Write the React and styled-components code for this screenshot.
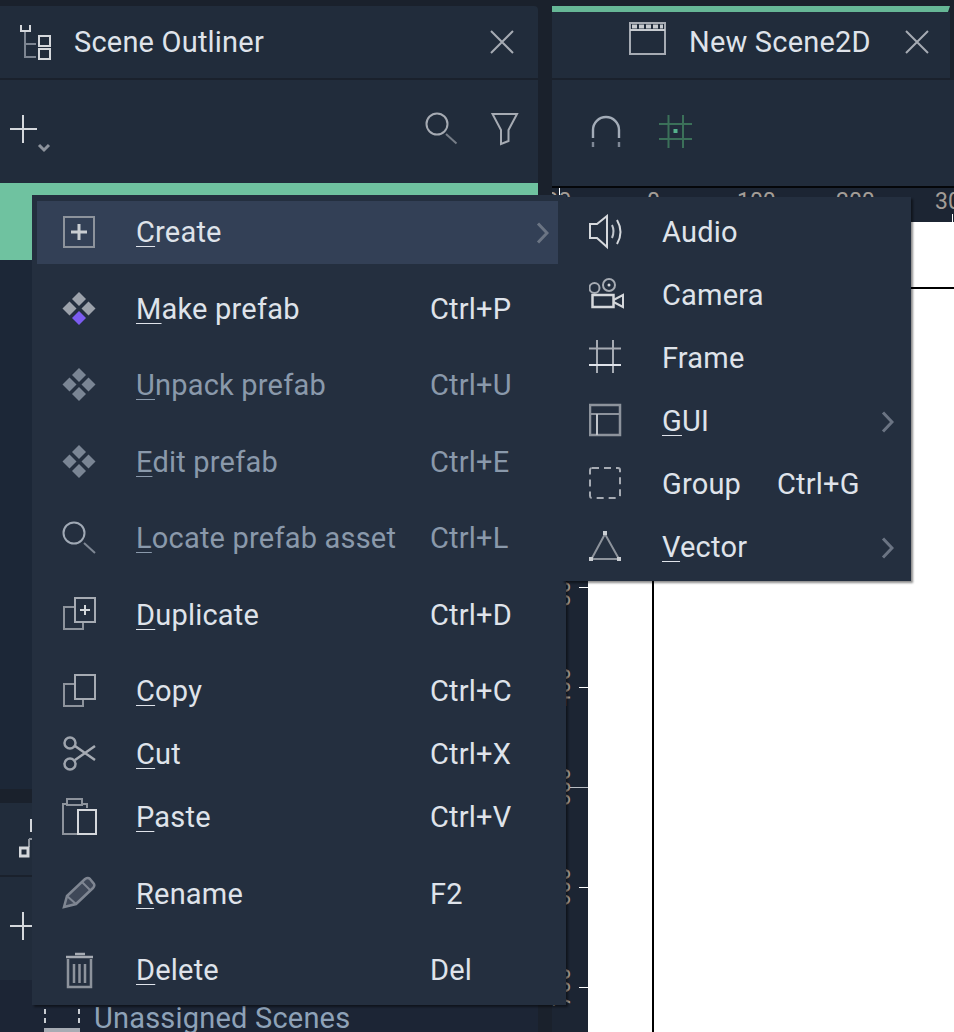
import styled, { createGlobalStyle } from "styled-components";

const GlobalStyle = createGlobalStyle`
  html, body { margin: 0; padding: 0; background: #1a212c; }
  body { font-family: Roboto, "Liberation Sans", sans-serif; }
`;

const Page = styled.div`
  position: relative;
  width: 954px;
  height: 1032px;
  overflow: hidden;
  display: flex;
  gap: 14px;
  padding-top: 6px;
  box-sizing: border-box;
  background: #1a212c;
`;

const LeftColumn = styled.div`
  width: 538px;
  flex: none;
  display: flex;
  flex-direction: column;
`;

const RightColumn = styled.div`
  flex: 1;
  min-width: 0;
  display: flex;
  flex-direction: column;
`;

const Header = styled.div`
  height: 72px;
  flex: none;
  display: flex;
  align-items: center;
  background: #212c3b;
  color: #dfe3ea;
  font-size: 29px;
  letter-spacing: 0.2px;
  padding-left: ${(p) => p.$left || 20}px;
  padding-right: ${(p) => p.$right || 22}px;
  box-sizing: border-box;
  border-radius: 0 4px 0 0;
`;

const TabHeader = styled(Header)`
  height: 66px;
  padding-bottom: 6px;
  border-radius: 0;
  margin-right: 4px;
`;

const TabStripe = styled.div`
  height: 6px;
  flex: none;
  margin-right: 4px;
  background: #66b796;
  clip-path: polygon(0 0, 100% 0, 99.5% 100%, 0 100%);
`;

const HeaderTitle = styled.span`
  margin-left: ${(p) => p.$gap}px;
  flex: 1;
  white-space: nowrap;
`;

const Toolbar = styled.div`
  height: ${(p) => p.$height || 103}px;
  margin-top: 2px;
  flex: none;
  display: flex;
  align-items: center;
  background: #212c3b;
  box-sizing: border-box;
  padding-left: ${(p) => p.$left || 0}px;
  padding-right: ${(p) => p.$right || 0}px;
  padding-bottom: ${(p) => p.$bottom || 0}px;
  gap: ${(p) => p.$gap || 0}px;
`;

const ToolSpacer = styled.div`
  flex: 1;
`;

const ToolGroup = styled.div`
  display: flex;
  align-items: center;
  gap: 33px;
`;

const Selected = styled.div`
  height: 77px;
  flex: none;
  background: #6fc2a0;
`;

const ListArea = styled.div`
  flex: 1;
  background: #1c2737;
`;

const PanelGap = styled.div`
  height: 14px;
  flex: none;
  background: #1a212c;
`;

const BottomList = styled.div`
  height: 52px;
  flex: none;
  display: flex;
  gap: 14px;
  padding: 20px 0 0 44px;
  box-sizing: border-box;
  color: #8ea2b8;
  font-size: 29px;
  letter-spacing: 0.2px;
  line-height: 36px;
  background: #1c2535;
`;

const ScenePane = styled.div`
  position: relative;
  flex: 1;
  background: #1c2533;
  border-top: 2px solid #05070a;
  overflow: hidden;
`;

const Canvas = styled.div`
  position: absolute;
  left: 36px;
  top: 34px;
  right: 0;
  bottom: 0;
  background: #fff;
`;

const AxisX = styled.div`
  position: absolute;
  left: 0;
  right: 0;
  top: 65px;
  height: 2px;
  background: #000;
`;

const AxisY = styled.div`
  position: absolute;
  left: 64px;
  top: 0;
  bottom: 0;
  width: 2px;
  background: #000;
`;

const TopLabel = styled.span`
  position: absolute;
  top: 0;
  font-size: 23px;
  line-height: 27px;
  color: #a39d97;
`;

const SideLabel = styled.span`
  position: absolute;
  left: -3px;
  font-size: 23px;
  line-height: 27px;
  color: #a39d97;
  writing-mode: vertical-rl;
  transform: translateY(-50%) rotate(180deg);
`;

const SideTick = styled.i`
  position: absolute;
  left: ${(p) => (p.$long ? 18 : 27)}px;
  right: calc(100% - 36px);
  height: 1px;
  background: ${(p) => (p.$long ? "#b9bdc4" : "#fff")};
`;

const TopTick = styled.i`
  position: absolute;
  width: 1px;
  background: #fff;
`;

const Menu = styled.div`
  position: absolute;
  left: ${(p) => p.$x}px;
  top: ${(p) => p.$y}px;
  width: ${(p) => p.$w}px;
  box-sizing: border-box;
  padding: ${(p) => p.$pad};
  background: #242f3f;
  box-shadow: 2px 2px 2px rgba(0, 0, 0, 0.45);
`;

const Row = styled.div`
  height: 63px;
  position: relative;
  display: flex;
  align-items: center;
  font-size: 29px;
  letter-spacing: 0.2px;
  white-space: nowrap;
  color: ${(p) => (p.$off ? "#8a99ab" : "#dfe3ea")};
  background: ${(p) => (p.$active ? "#334056" : "transparent")};
  margin-bottom: ${(p) => (p.$sep ? 13.5 : 0)}px;
`;

const IconSlot = styled.div`
  width: ${(p) => p.$w}px;
  flex: none;
  display: flex;
  padding-left: ${(p) => p.$left}px;
  box-sizing: border-box;
`;

const Label = styled.span`
  width: ${(p) => p.$w}px;
  flex: none;
`;

const Mnemonic = styled.u`
  text-decoration-thickness: 1px;
  text-underline-offset: 4px;
`;

const Shortcut = styled.span`
  flex: none;
`;

const Arrow = styled.svg`
  position: absolute;
  right: ${(p) => p.$right}px;
  top: 21px;
`;

const PlusSvg = styled.svg`
  margin-top: 13px;
`;

const ClapSvg = styled.svg`
  margin-top: -7px;
`;

const StubIcon = styled.svg`
  margin-left: -1px;
`;

const Svg = ({ w = 36, h = 36, children }) => (
  <svg width={w} height={h} viewBox={`0 0 ${w} ${h}`} fill="none" stroke="#a6abb3" strokeWidth="2">
    {children}
  </svg>
);

const Chevron = ({ right }) => (
  <Arrow $right={right} width="13" height="22" viewBox="0 0 13 22" fill="none" stroke="#6b7483" strokeWidth="3">
    <path d="M2 1.5 11 11 2 20.5" />
  </Arrow>
);

const OutlinerIcon = () => (
  <Svg w={32} h={36}>
    <path d="M1 1v6h9V1" stroke="#d5d8dc" />
    <path d="M5 8v25h11M5 20h11" stroke="#7d8591" />
    <rect x="19" y="12" width="11" height="10" stroke="#d5d8dc" />
    <rect x="19" y="25" width="11" height="10" stroke="#d5d8dc" />
  </Svg>
);

const SecondHeaderIcon = () => (
  <StubIcon width="14" height="40" viewBox="0 0 14 40" fill="none" stroke="#d5d8dc" strokeWidth="2">
    <path d="M12 0V13" />
    <path d="M10 20H14M10 20V28" stroke="#8d939c" />
    <rect x="1" y="29" width="8" height="8" strokeWidth="3" />
  </StubIcon>
);

const CloseIcon = () => (
  <svg width="26" height="26" viewBox="0 0 26 26" stroke="#a6abb3" strokeWidth="2">
    <path d="M2 2 24 24M24 2 2 24" />
  </svg>
);

const ClapIcon = () => (
  <ClapSvg width="38" height="34" viewBox="0 0 38 34" fill="none" stroke="#a6abb3" strokeWidth="2">
    <rect x="1" y="1" width="35" height="31" />
    <path d="M1 8h35" stroke="#c7cbd0" strokeWidth="2" />
    <path d="M3 4.500h31" stroke="#c7cbd0" strokeWidth="4" strokeDasharray="5 2" />
  </ClapSvg>
);

const PlusDrop = () => (
  <PlusSvg width="52" height="40" viewBox="0 0 52 40" fill="none" stroke="#d5d8dc" strokeWidth="2">
    <path d="M13 0V28M0 14H27" />
    <path d="M29 30l5 5 5-5" stroke="#8d939c" strokeWidth="3" />
  </PlusSvg>
);

const PlusOnly = () => (
  <PlusSvg width="52" height="40" viewBox="0 0 52 40" fill="none" stroke="#d5d8dc" strokeWidth="2">
    <path d="M13 0V28M0 14H27" />
  </PlusSvg>
);

const SearchIcon = () => (
  <svg width="33" height="33" viewBox="0 0 33 33" fill="none" stroke="#a6abb3" strokeWidth="2">
    <circle cx="12" cy="12" r="10.500" />
    <path d="M21 22 31.500 31.500" stroke="#767d87" />
  </svg>
);

const FilterIcon = () => (
  <svg width="28" height="34" viewBox="0 0 28 34" fill="none" stroke="#a6abb3" strokeWidth="2">
    <path d="M1.500 2H26L17.500 18V29L10 32V18Z" />
  </svg>
);

const MagnetIcon = () => (
  <svg width="30" height="33" viewBox="0 0 30 33" fill="none" stroke="#a3acb8" strokeWidth="2.400">
    <path d="M2 23V15a13 13 0 0 1 26 0v8" />
    <path d="M2 27v5M28 27v5" stroke="#7f8896" />
  </svg>
);

const GridIcon = () => (
  <svg width="33" height="33" viewBox="0 0 33 33" fill="none" stroke="#3b7059" strokeWidth="2">
    <path d="M9.500 0V33M24 0V33M0 9H33M0 24H33" />
    <rect x="14.500" y="14" width="4" height="4" fill="#55b28c" stroke="none" />
  </svg>
);

const PlusBox = () => (
  <Svg>
    <rect x="3" y="3" width="30" height="30" stroke="#8d939c" />
    <path d="M18 10V26M10 18H26" stroke="#c9cdd2" strokeWidth="3" />
  </Svg>
);

const Prefab = ({ accent, off }) => {
  const c = off ? "#7a8594" : "#9ca2ab";
  const diamond = (x, y, fill) => <path d={`M${x} ${y - 7}l7 7-7 7-7-7z`} fill={fill} stroke="none" />;
  return (
    <Svg>
      {diamond(18, 8, c)}
      {diamond(8.500, 17.500, c)}
      {diamond(27.500, 17.500, c)}
      {diamond(18, 27, accent ? "#7c5cf0" : c)}
    </Svg>
  );
};

const LocateIcon = () => (
  <Svg>
    <circle cx="13" cy="13" r="10.500" stroke="#a0a9b5" />
    <path d="M23 23 34 33" stroke="#7e8794" />
  </Svg>
);

const DuplicateIcon = () => (
  <Svg>
    <path d="M13 10H3V32H22V26" stroke="#8d939c" />
    <rect x="14" y="1" width="20" height="24" stroke="#a6abb3" />
    <path d="M24 8V18M19 13H29" stroke="#d5d8dc" />
  </Svg>
);

const CopyIcon = () => (
  <Svg>
    <path d="M13 11H3V33H22V27" stroke="#8d939c" />
    <rect x="14" y="2" width="20" height="24" stroke="#a6abb3" />
  </Svg>
);

const CutIcon = () => (
  <Svg>
    <circle cx="9" cy="7" r="5.500" stroke="#9ea4ad" strokeWidth="2.500" />
    <circle cx="9" cy="28" r="5.500" stroke="#9ea4ad" strokeWidth="2.500" />
    <path d="M14 10 34 24M14 24 34 10" stroke="#a6abb3" strokeWidth="2.500" />
  </Svg>
);

const PasteIcon = () => (
  <Svg w={38} h={38}>
    <path d="M6 6H2V36H16M21 6H26V10" stroke="#8d939c" />
    <rect x="6" y="1" width="15" height="6" stroke="#8d939c" />
    <rect x="17" y="12" width="18" height="24" stroke="#d5d8dc" />
  </Svg>
);

const PencilIcon = () => (
  <Svg>
    <path d="M3 31 6 20 24 3Q27 1 29 3L33 8Q34 10 32 12L15 28Z" fill="#3f4858" stroke="#7f8692" strokeWidth="2.500" />
    <path d="M21 6 30 15M6 20 15 28" stroke="#7f8692" strokeWidth="2" />
  </Svg>
);

const TrashIcon = () => (
  <Svg w={36} h={38}>
    <path d="M5 6H32" stroke="#a6abb3" strokeWidth="2.500" />
    <path d="M14 3H24" stroke="#a6abb3" strokeWidth="2.500" />
    <path d="M7 8V36H30V8M13 13V32M18.500 13V32M24 13V32" stroke="#8d939c" strokeWidth="2.500" />
  </Svg>
);

const AudioIcon = () => (
  <Svg>
    <path d="M1 10H8L18 2V33L8 24H1Z" stroke="#d5d8dc" />
    <path d="M23 11q3 6 0 13" stroke="#c2c6cc" />
    <path d="M28 6q7 12 0 24" stroke="#d5d8dc" />
  </Svg>
);

const CameraIcon = () => (
  <Svg w={36} h={34}>
    <circle cx="5.500" cy="10" r="5" stroke="#a6abb3" />
    <circle cx="20" cy="7" r="6" stroke="#a6abb3" />
    <circle cx="20" cy="7" r="1.500" fill="#d5d8dc" stroke="none" />
    <rect x="3.500" y="17" width="21" height="12" stroke="#d5d8dc" strokeWidth="2.500" />
    <path d="M24.500 24 34 29V17L24.500 22" stroke="#d5d8dc" />
  </Svg>
);

const FrameIcon = () => (
  <Svg>
    <path d="M8 0V33M24 0V33" stroke="#a6abb3" />
    <path d="M0 8.500H32" stroke="#a6abb3" />
    <path d="M0 25H32" stroke="#dfe3ea" />
  </Svg>
);

const GuiIcon = () => (
  <Svg>
    <rect x="1" y="2" width="30" height="30" stroke="#8d939c" strokeWidth="2.500" />
    <path d="M1 11H31" stroke="#8d939c" />
    <path d="M8 11V32" stroke="#c0c4ca" />
  </Svg>
);

const GroupIcon = () => (
  <Svg>
    <rect x="1" y="2" width="30" height="30" rx="2" stroke="#a6abb3" strokeDasharray="7 5" />
  </Svg>
);

const VectorIcon = () => (
  <Svg>
    <path d="M16 5 2.500 30H30Z" stroke="#8d939c" />
    <rect x="14" y="2" width="4" height="4" fill="#c9cdd2" stroke="none" />
    <rect x="0" y="28" width="4" height="4" fill="#c9cdd2" stroke="none" />
    <rect x="28" y="28" width="4" height="4" fill="#c9cdd2" stroke="none" />
  </Svg>
);

const UnassignedIcon = () => (
  <svg width="36" height="32" viewBox="0 0 36 32" fill="none" stroke="#c9cdd2" strokeWidth="2">
    <path d="M1 0V26" strokeDasharray="5 4" />
    <path d="M35 0V26" strokeDasharray="5 4" />
    <path d="M0 28H36V32H0Z" fill="#a6abb3" stroke="none" />
  </svg>
);

const mainItems = [
  { icon: <PlusBox />, key: "C", rest: "reate", active: true, arrow: true, sep: true },
  { icon: <Prefab accent />, key: "M", rest: "ake prefab", cut: "Ctrl+P", sep: true },
  { icon: <Prefab off />, key: "U", rest: "npack prefab", cut: "Ctrl+U", off: true, sep: true },
  { icon: <Prefab off />, key: "E", rest: "dit prefab", cut: "Ctrl+E", off: true, sep: true },
  { icon: <LocateIcon />, key: "L", rest: "ocate prefab asset", cut: "Ctrl+L", off: true, sep: true },
  { icon: <DuplicateIcon />, key: "D", rest: "uplicate", cut: "Ctrl+D", sep: true },
  { icon: <CopyIcon />, key: "C", rest: "opy", cut: "Ctrl+C" },
  { icon: <CutIcon />, key: "C", rest: "ut", cut: "Ctrl+X" },
  { icon: <PasteIcon />, key: "P", rest: "aste", cut: "Ctrl+V", sep: true },
  { icon: <PencilIcon />, key: "R", rest: "ename", cut: "F2", sep: true },
  { icon: <TrashIcon />, key: "D", rest: "elete", cut: "Del" },
];

const subItems = [
  { icon: <AudioIcon />, rest: "Audio" },
  { icon: <CameraIcon />, rest: "Camera" },
  { icon: <FrameIcon />, rest: "Frame" },
  { icon: <GuiIcon />, key: "G", rest: "UI", arrow: true },
  { icon: <GroupIcon />, rest: "Group", cut: "Ctrl+G" },
  { icon: <VectorIcon />, key: "V", rest: "ector", arrow: true },
];

const topLabels = [
  { x: -26, t: "-100" },
  { x: 95, t: "0" },
  { x: 185, t: "100" },
  { x: 284, t: "200" },
  { x: 383, t: "300" },
];

const sideTicks = [
  { y: 399, t: "300" },
  { y: 499, t: "400" },
  { y: 599, t: "500", long: true },
  { y: 699, t: "600" },
  { y: 799, t: "700" },
];

export default function App() {
  return (
    <Page>
      <GlobalStyle />
      <LeftColumn>
        <Header $right={23}>
          <OutlinerIcon />
          <HeaderTitle $gap={22}>Scene Outliner</HeaderTitle>
          <CloseIcon />
        </Header>
        <Toolbar $left={10} $right={19} $bottom={6}>
          <PlusDrop />
          <ToolSpacer />
          <ToolGroup>
            <SearchIcon />
            <FilterIcon />
          </ToolGroup>
        </Toolbar>
        <Selected />
        <ListArea />
        <PanelGap />
        <Header>
          <SecondHeaderIcon />
        </Header>
        <Toolbar $left={10} $bottom={6}>
          <PlusOnly />
        </Toolbar>
        <BottomList>
          <UnassignedIcon />
          Unassigned Scenes
        </BottomList>
      </LeftColumn>

      <RightColumn>
        <TabStripe />
        <TabHeader $left={77} $right={20}>
          <ClapIcon />
          <HeaderTitle $gap={22}>New Scene2D</HeaderTitle>
          <CloseIcon />
        </TabHeader>
        <Toolbar $left={39} $gap={38} $height={106} $bottom={3}>
          <MagnetIcon />
          <GridIcon />
        </Toolbar>
        <ScenePane>
          {topLabels.map((l) => (
            <TopLabel key={l.t} style={{ left: l.x }}>{l.t}</TopLabel>
          ))}
          <TopTick style={{ left: 7, top: 0, height: 9 }} />
          <TopTick style={{ left: 400, top: 26, height: 8 }} />
          {sideTicks.map((l) => (
            <SideLabel key={l.t} style={{ top: l.y }}>{l.t}</SideLabel>
          ))}
          {sideTicks.map((l) => (
            <SideTick key={l.t} $long={l.long} style={{ top: l.y }} />
          ))}
          <Canvas>
            <AxisX />
            <AxisY />
          </Canvas>
        </ScenePane>
      </RightColumn>

      <Menu $x={32} $y={195} $w={534} $pad="5.5px 8px 3px 5px">
        {mainItems.map((it, i) => (
          <Row key={i} $active={it.active} $off={it.off} $sep={it.sep}>
            <IconSlot $w={99} $left={24}>{it.icon}</IconSlot>
            <Label $w={294}>
              <Mnemonic>{it.key}</Mnemonic>
              {it.rest}
            </Label>
            {it.cut && <Shortcut>{it.cut}</Shortcut>}
            {it.arrow && <Chevron right={9} />}
          </Row>
        ))}
      </Menu>

      <Menu $x={562} $y={197} $w={349} $pad="3.5px 0 2.5px 0">
        {subItems.map((it, i) => (
          <Row key={i}>
            <IconSlot $w={100} $left={27}>{it.icon}</IconSlot>
            <Label $w={115}>
              {it.key && <Mnemonic>{it.key}</Mnemonic>}
              {it.rest}
            </Label>
            {it.cut && <Shortcut>{it.cut}</Shortcut>}
            {it.arrow && <Chevron right={17} />}
          </Row>
        ))}
      </Menu>
    </Page>
  );
}
